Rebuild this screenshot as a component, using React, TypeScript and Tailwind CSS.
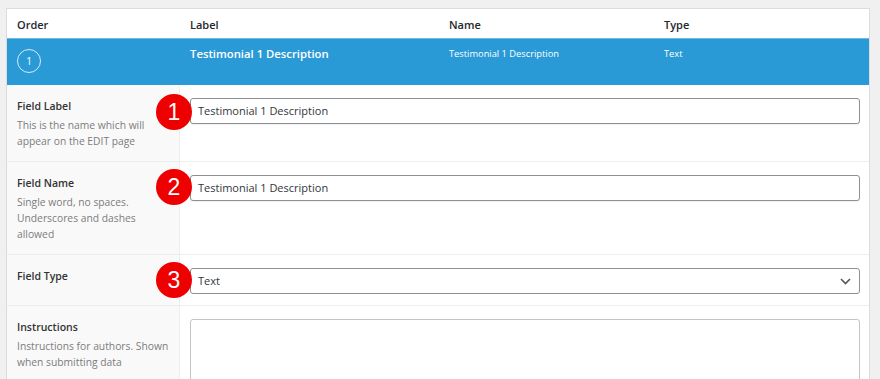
import React from "react";

const font = { fontFamily: '"Open Sans", "Noto Sans", sans-serif' };

function Badge({ n, top }: { n: number; top: number }) {
  return (
    <div
      className="absolute left-[149px] w-[36px] h-[36px] rounded-full bg-[#ee0000] flex items-center justify-center text-white text-[23px] leading-none"
      style={{ top, fontFamily: '"Liberation Sans", Arial, sans-serif' }}
    >
      {n}
    </div>
  );
}

function Row({
  label,
  desc,
  children,
  border = true,
}: {
  label: string;
  desc?: string[];
  children: React.ReactNode;
  border?: boolean;
}) {
  return (
    <div className={"flex " + (border ? "border-b border-[#eeeeee]" : "")}>
      <div className="w-[173px] shrink-0 bg-[#f9f9f9] border-r border-[#eeeeee] pl-[10px] pt-[13px] pb-[12px]">
        <div className="text-[10.5px] leading-[16px] font-semibold text-[#333]">{label}</div>
        {desc && (
          <div className="mt-[3px] text-[10.3px] leading-[16px] text-[#7c7c7c] whitespace-nowrap">
            {desc.map((d, i) => (
              <div key={i}>{d}</div>
            ))}
          </div>
        )}
      </div>
      <div className="flex-1 pl-[10px] pr-[9px] pt-[13px] pb-[11px]">{children}</div>
    </div>
  );
}

function Input({ value }: { value: string }) {
  return (
    <div className="h-[26px] rounded-[3px] border border-[#8c8f94] bg-white pl-[7px] flex items-center text-[11px] text-[#32373c] shadow-[0_1px_1px_rgba(0,0,0,0.06)]">
      {value}
    </div>
  );
}

export default function App() {
  return (
    <div className="w-[880px] h-[379px] overflow-hidden bg-[#f0f0f0] pt-[8px] pl-[6px]" style={font}>
      <div className="relative w-[864px] bg-white border border-[#dcdcde] border-b-0">
        {/* header */}
        <div className="grid grid-cols-[183px_259px_215px_1fr] h-[29px] items-center pt-[4px] text-[11px] font-semibold text-[#23282d]">
          <div className="pl-[10px]">Order</div>
          <div>Label</div>
          <div>Name</div>
          <div>Type</div>
        </div>
        {/* selected row */}
        <div className="grid grid-cols-[183px_259px_215px_1fr] h-[47px] bg-[#2a9ad6] border-t border-[#6cb8e4] text-white">
          <div className="pl-[10px] pt-[10px]">
            <div className="w-[24px] h-[24px] rounded-full border border-white/80 flex items-center justify-center text-[10px] leading-none">
              1
            </div>
          </div>
          <div className="pt-[7px] text-[11.3px] font-semibold leading-[16px]">Testimonial 1 Description</div>
          <div className="pt-[8px] text-[9.3px] leading-[14px]">Testimonial 1 Description</div>
          <div className="pt-[8px] text-[9.3px] leading-[14px]">Text</div>
        </div>
        <div className="relative">
          <Row label="Field Label" desc={["This is the name which will", "appear on the EDIT page"]}>
            <Input value="Testimonial 1 Description" />
          </Row>
          <Row label="Field Name" desc={["Single word, no spaces.", "Underscores and dashes", "allowed"]}>
            <Input value="Testimonial 1 Description" />
          </Row>
          <Row label="Field Type">
            <div className="h-[26px] rounded-[3px] border border-[#8c8f94] bg-white pl-[7px] pr-[8px] flex items-center justify-between text-[11px] text-[#32373c]">
              <span>Text</span>
              <svg width="11" height="7" viewBox="0 0 11 7" fill="none">
                <path d="M1 1l4.5 4.5L10 1" stroke="#50575e" strokeWidth="1.6" />
              </svg>
            </div>
          </Row>
          <Row label="Instructions" desc={["Instructions for authors. Shown", "when submitting data"]} border={false}>
            <div className="h-[80px] rounded-[3px] border border-[#c3c4c7] bg-white" />
          </Row>
          <Badge n={1} top={9} />
          <Badge n={2} top={84} />
          <Badge n={3} top={177} />
        </div>
      </div>
    </div>
  );
}
